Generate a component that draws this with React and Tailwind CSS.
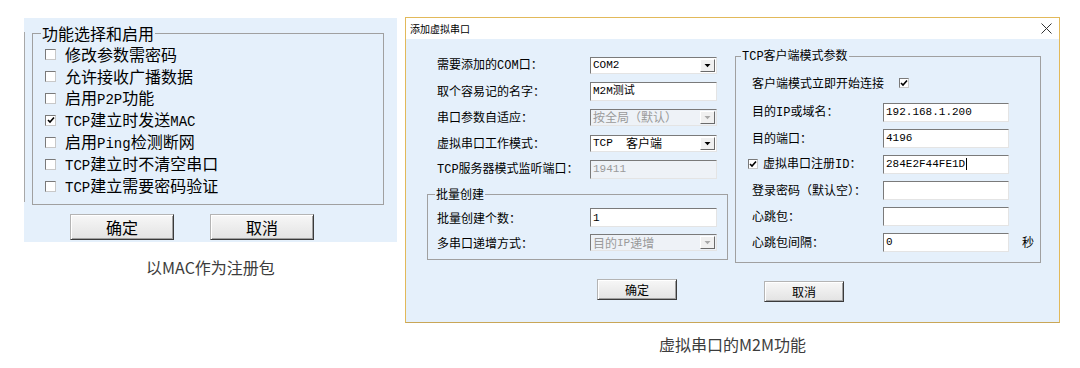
import React from "react";

const CJK = "font-['Noto_Sans_CJK_SC','Liberation_Sans',sans-serif]";

function Mix({ text, latin }) {
  const parts = text.split(/([\x20-\x7E]+)/).filter(Boolean);
  return parts.map((p, i) =>
    /^[\x20-\x7E]+$/.test(p) ? (
      <span key={i} className={latin}>
        {p}
      </span>
    ) : (
      <span key={i}>{p}</span>
    )
  );
}

function Box({ checked, big }) {
  return (
    <span
      className={`${big ? "w-[11px] h-[11px]" : "w-[10px] h-[10px]"} shrink-0 inline-flex items-center justify-center bg-white border border-t-[#7a7a7a] border-l-[#7a7a7a] border-r-[#c8c8c8] border-b-[#c8c8c8]`}
    >
      {checked && (
        <svg width="8" height="8" viewBox="0 0 8 8">
          <path d="M1 4 L3 6 L7 1.5" stroke="#000" strokeWidth="1.6" fill="none" />
        </svg>
      )}
    </span>
  );
}

function Field({ value, disabled, narrow, caret }) {
  return (
    <div
      className={`${narrow ? "w-[126px]" : "w-[127px]"} h-[19px] flex items-center pl-[2px] border border-t-[#7a7a7a] border-l-[#7a7a7a] border-r-[#e4e4e4] border-b-[#e4e4e4] ${
        disabled ? "bg-[#eef2f7] text-[#9a9a9a]" : "bg-white text-black"
      } font-['Liberation_Mono','Noto_Sans_CJK_SC',monospace] text-[11px] leading-[14px] whitespace-pre`}
    >
      {value}
      {caret && <span className="w-px h-[12px] bg-black ml-[1px]" />}
    </div>
  );
}

function Combo({ value, disabled }) {
  return (
    <div
      className={`w-[127px] h-[17px] flex border border-t-[#7a7a7a] border-l-[#7a7a7a] border-r-[#e4e4e4] border-b-[#e4e4e4] ${
        disabled ? "bg-[#eef2f7] text-[#9a9a9a]" : "bg-white text-black"
      }`}
    >
      <div className="flex-1 flex items-center pl-[2px] text-[12px] leading-[14px] whitespace-pre">
        <Mix text={value} latin="font-['Liberation_Mono',monospace] text-[11px]" />
      </div>
      <div className="w-[15px] my-[1px] mr-[1px] flex items-center justify-center bg-[#f0f0f0] border border-t-white border-l-white border-r-[#6a6a6a] border-b-[#6a6a6a]">
        <svg width="7" height="5" viewBox="0 0 7 5">
          <path d="M0.5 1 H6.5 L3.5 4.2 Z" fill={disabled ? "#a8a8a8" : "#000"} />
        </svg>
      </div>
    </div>
  );
}

function Btn({ label, big }) {
  return (
    <div
      className={`${
        big ? "w-[104px] h-[26px] text-[16px]" : "w-[80px] h-[21px] text-[12px]"
      } flex items-center justify-center bg-linear-to-b from-[#f7f7f7] to-[#e3e3e3] border border-t-[#b4b4b4] border-l-[#b4b4b4] border-r-[#3a3a3a] border-b-[#3a3a3a] shadow-[inset_1px_1px_0_#ffffff,inset_-1px_-1px_0_#a0a0a0] text-black leading-none`}
    >
      {label}
    </div>
  );
}

const leftItems = [
  ["修改参数需密码", false],
  ["允许接收广播数据", false],
  ["启用P2P功能", false],
  ["TCP建立时发送MAC", true],
  ["启用Ping检测断网", false],
  ["TCP建立时不清空串口", false],
  ["TCP建立需要密码验证", false],
];

const DL = "font-['Liberation_Mono',monospace] text-[12px]";

function LRow({ label, children }) {
  return (
    <div className="h-[26px] flex items-center">
      <div className="w-[163px] pl-[10px] text-[12px] leading-[14px] whitespace-pre">
        <Mix text={label} latin={DL} />
      </div>
      {children}
    </div>
  );
}

function RRow({ label, children, box }) {
  return (
    <div className="h-[26px] flex items-center">
      <div className={`w-[147px] ${box ? "pl-[12px]" : "pl-[16px]"} flex items-center text-[12px] leading-[14px] whitespace-pre`}>
        {box && <span className="mr-[5px] flex"><Box checked /></span>}
        <span>
          <Mix text={label} latin={DL} />
        </span>
      </div>
      {children}
    </div>
  );
}

export default function App() {
  return (
    <div className={`w-[1080px] h-[368px] bg-white flex items-start overflow-hidden ${CJK} text-black`}>
      {/* Left block */}
      <div className="ml-[24px] mt-[18px] flex flex-col items-center">
        <div className="w-[373px] h-[224px] bg-[#e5f0fb] flex flex-col">
          <div className="flex items-start">
            <div className="w-px h-[170px] mt-[14px] bg-[#a8a8a8]" />
            <fieldset className="ml-[7px] mt-[7px] w-[352px] border border-[#a0a0a0] p-0 m-0">
              <legend className="ml-[8px] px-[1px] text-[16px] leading-[16px]">功能选择和启用</legend>
              <div className="pl-[12px] pt-[2px] pb-[7px] flex flex-col">
                {leftItems.map(([t, c]) => (
                  <div key={t} className="h-[22px] flex items-center">
                    <Box checked={c} big />
                    <span className="ml-[9px] text-[16px] leading-[16px] whitespace-pre">
                      <Mix text={t} latin="font-['Liberation_Mono',monospace] text-[14px]" />
                    </span>
                  </div>
                ))}
              </div>
            </fieldset>
          </div>
          <div className="flex mt-[9px] pl-[46px] gap-[36px]">
            <Btn label="确定" big />
            <Btn label="取消" big />
          </div>
        </div>
        <div className="mt-[15px] text-[16px] leading-[20px] text-[#3c3c3c]">以MAC作为注册包</div>
      </div>

      {/* Right block */}
      <div className="ml-[8px] mt-[17px] flex flex-col items-center">
        <div className="w-[655px] h-[306px] border border-[#e2b95a] border-b-[#c9a657] flex flex-col">
          <div className="h-[21px] bg-white flex items-center justify-between pl-[4px] pr-[7px]">
            <span className="text-[10px] leading-[12px]">添加虚拟串口</span>
            <svg width="11" height="11" viewBox="0 0 11 11">
              <path d="M0.5 0.5 L10.5 10.5 M10.5 0.5 L0.5 10.5" stroke="#333" strokeWidth="1" />
            </svg>
          </div>
          <div className="flex-1 bg-[#e5f0fb] flex flex-col">
            <div className="flex items-start">
              {/* Left column */}
              <div className="w-[301px] ml-[21px] pt-[13px] flex flex-col">
                <LRow label="需要添加的COM口：">
                  <Combo value="COM2" />
                </LRow>
                <LRow label="取个容易记的名字：">
                  <Field value="M2M测试" />
                </LRow>
                <LRow label="串口参数自适应：">
                  <Combo value="按全局（默认）" disabled />
                </LRow>
                <LRow label="虚拟串口工作模式：">
                  <Combo value="TCP  客户端" />
                </LRow>
                <LRow label="TCP服务器模式监听端口：">
                  <Field value="19411" disabled />
                </LRow>
                <fieldset className="mt-[5px] border border-[#a0a0a0] p-0 m-0 w-[301px]">
                  <legend className="ml-[7px] px-[1px] text-[12px] leading-[14px]">批量创建</legend>
                  <div className="pt-[4px] pb-[4px] flex flex-col">
                    <div className="h-[25px] flex items-center">
                      <div className="w-[162px] pl-[9px] text-[12px] leading-[14px]">批量创建个数：</div>
                      <Field value="1" />
                    </div>
                    <div className="h-[25px] flex items-center">
                      <div className="w-[162px] pl-[9px] text-[12px] leading-[14px]">多串口递增方式：</div>
                      <Combo value="目的IP递增" disabled />
                    </div>
                  </div>
                </fieldset>
              </div>
              {/* Right column */}
              <div className="w-[306px] ml-[7px] pt-[9px]">
                <fieldset className="border border-[#a0a0a0] p-0 m-0 w-[306px]">
                  <legend className="ml-[5px] px-[1px] text-[12px] leading-[14px] whitespace-pre">
                    <Mix text="TCP客户端模式参数" latin={DL} />
                  </legend>
                  <div className="pt-[9px] pb-[7px] flex flex-col">
                    <div className="h-[20px] flex items-center pl-[16px]">
                      <span className="text-[12px] leading-[14px]">客户端模式立即开始连接</span>
                      <span className="ml-[15px] flex">
                        <Box checked />
                      </span>
                    </div>
                    <div className="mt-[6px]" />
                    <RRow label="目的IP或域名：">
                      <Field value="192.168.1.200" narrow />
                    </RRow>
                    <RRow label="目的端口：">
                      <Field value="4196" narrow />
                    </RRow>
                    <RRow label="虚拟串口注册ID：" box>
                      <Field value="284E2F44FE1D" narrow caret />
                    </RRow>
                    <RRow label="登录密码（默认空）：">
                      <Field value="" narrow />
                    </RRow>
                    <RRow label="心跳包：">
                      <Field value="" narrow />
                    </RRow>
                    <RRow label="心跳包间隔：">
                      <Field value="0" narrow />
                      <span className="ml-[13px] text-[12px] leading-[14px]">秒</span>
                    </RRow>
                  </div>
                </fieldset>
              </div>
            </div>
            <div className="flex items-start mt-[16px] ml-[191px]">
              <Btn label="确定" />
              <div className="ml-[87px] mt-[2px]">
                <Btn label="取消" />
              </div>
            </div>
          </div>
        </div>
        <div className="mt-[11px] text-[16px] leading-[20px] text-[#3c3c3c]">虚拟串口的M2M功能</div>
      </div>
    </div>
  );
}
